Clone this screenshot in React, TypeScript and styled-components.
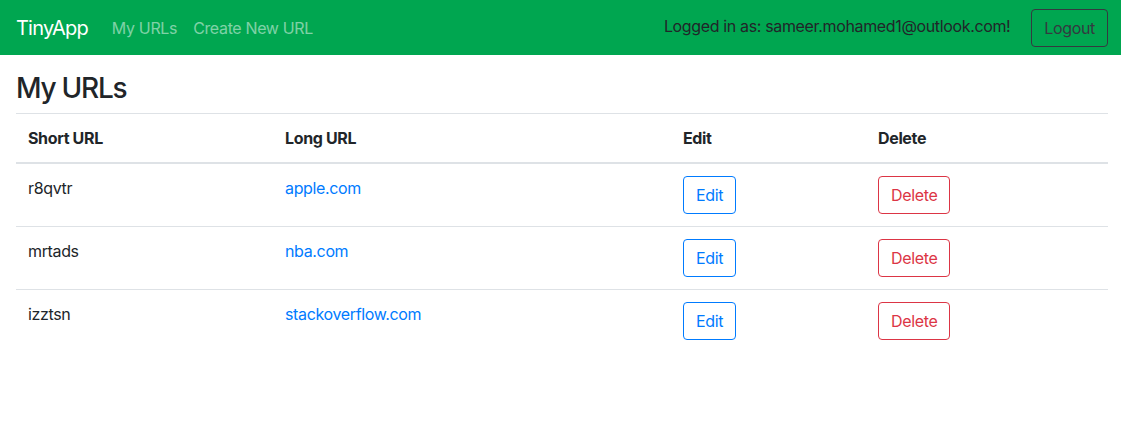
import React from "react";
import styled, { createGlobalStyle } from "styled-components";

const Global = createGlobalStyle`
  * { box-sizing: border-box; }
  body {
    margin: 0;
    font-family: Inter, "Noto Sans", "Liberation Sans", sans-serif;
    font-size: 16px;
    line-height: 1.5;
    letter-spacing: -0.022em;
    color: #212529;
    background: #fff;
  }
`;

const Navbar = styled.nav`
  display: flex;
  align-items: center;
  height: 55px;
  padding: 0 13px 0 16px;
  background: #00a650;
`;

const Brand = styled.a`
  font-size: 20px;
  line-height: 30px;
  letter-spacing: -0.04em;
  color: #fff;
  margin-right: 16px;
  text-decoration: none;
`;

const NavLink = styled.a`
  padding: 8px;
  color: rgba(255, 255, 255, 0.5);
  text-decoration: none;
`;

const NavRight = styled.div`
  margin-left: auto;
  display: flex;
  align-items: center;
  gap: 21px;
`;

const UserText = styled.span`
  color: #212529;
  margin-top: -4px;
`;

const OutlineButton = styled.button<{ $color: string }>`
  font-family: inherit;
  font-size: 16px;
  line-height: 24px;
  letter-spacing: inherit;
  padding: 6px 12px;
  height: 38px;
  border-radius: 4px;
  background: transparent;
  border: 1px solid ${(p) => p.$color};
  color: ${(p) => p.$color};
  cursor: pointer;
`;

const Main = styled.main`
  padding: 0 13px 0 16px;
`;

const Title = styled.h3`
  margin: 0;
  padding: 16px 0 8px;
  font-size: 28px;
  font-weight: 500;
  line-height: 34px;
  letter-spacing: -0.045em;
`;

const Table = styled.table`
  width: 100%;
  border-collapse: collapse;
`;

const Th = styled.th<{ $w: number }>`
  width: ${(p) => p.$w}px;
  text-align: left;
  font-weight: 700;
  padding: 12px;
  border-top: 1px solid #dee2e6;
  border-bottom: 2px solid #dee2e6;
  vertical-align: bottom;
`;

const Td = styled.td`
  padding: 12px;
  border-top: 1px solid #dee2e6;
  vertical-align: top;
`;

const UrlLink = styled.a`
  color: #007bff;
  text-decoration: none;
`;

const urls = [
  { short: "r8qvtr", long: "apple.com" },
  { short: "mrtads", long: "nba.com" },
  { short: "izztsn", long: "stackoverflow.com" },
];

export default function App() {
  return (
    <>
      <Global />
      <Navbar>
        <Brand href="#">TinyApp</Brand>
        <NavLink href="#">My URLs</NavLink>
        <NavLink href="#">Create New URL</NavLink>
        <NavRight>
          <UserText>Logged in as: sameer.mohamed1@outlook.com!</UserText>
          <OutlineButton $color="#343a40">Logout</OutlineButton>
        </NavRight>
      </Navbar>
      <Main>
        <Title>My URLs</Title>
        <Table>
          <thead>
            <tr>
              <Th $w={257}>Short URL</Th>
              <Th $w={398}>Long URL</Th>
              <Th $w={195}>Edit</Th>
              <Th $w={242}>Delete</Th>
            </tr>
          </thead>
          <tbody>
            {urls.map((u) => (
              <tr key={u.short}>
                <Td>{u.short}</Td>
                <Td>
                  <UrlLink href="#">{u.long}</UrlLink>
                </Td>
                <Td>
                  <OutlineButton $color="#007bff">Edit</OutlineButton>
                </Td>
                <Td>
                  <OutlineButton $color="#dc3545">Delete</OutlineButton>
                </Td>
              </tr>
            ))}
          </tbody>
        </Table>
      </Main>
    </>
  );
}
